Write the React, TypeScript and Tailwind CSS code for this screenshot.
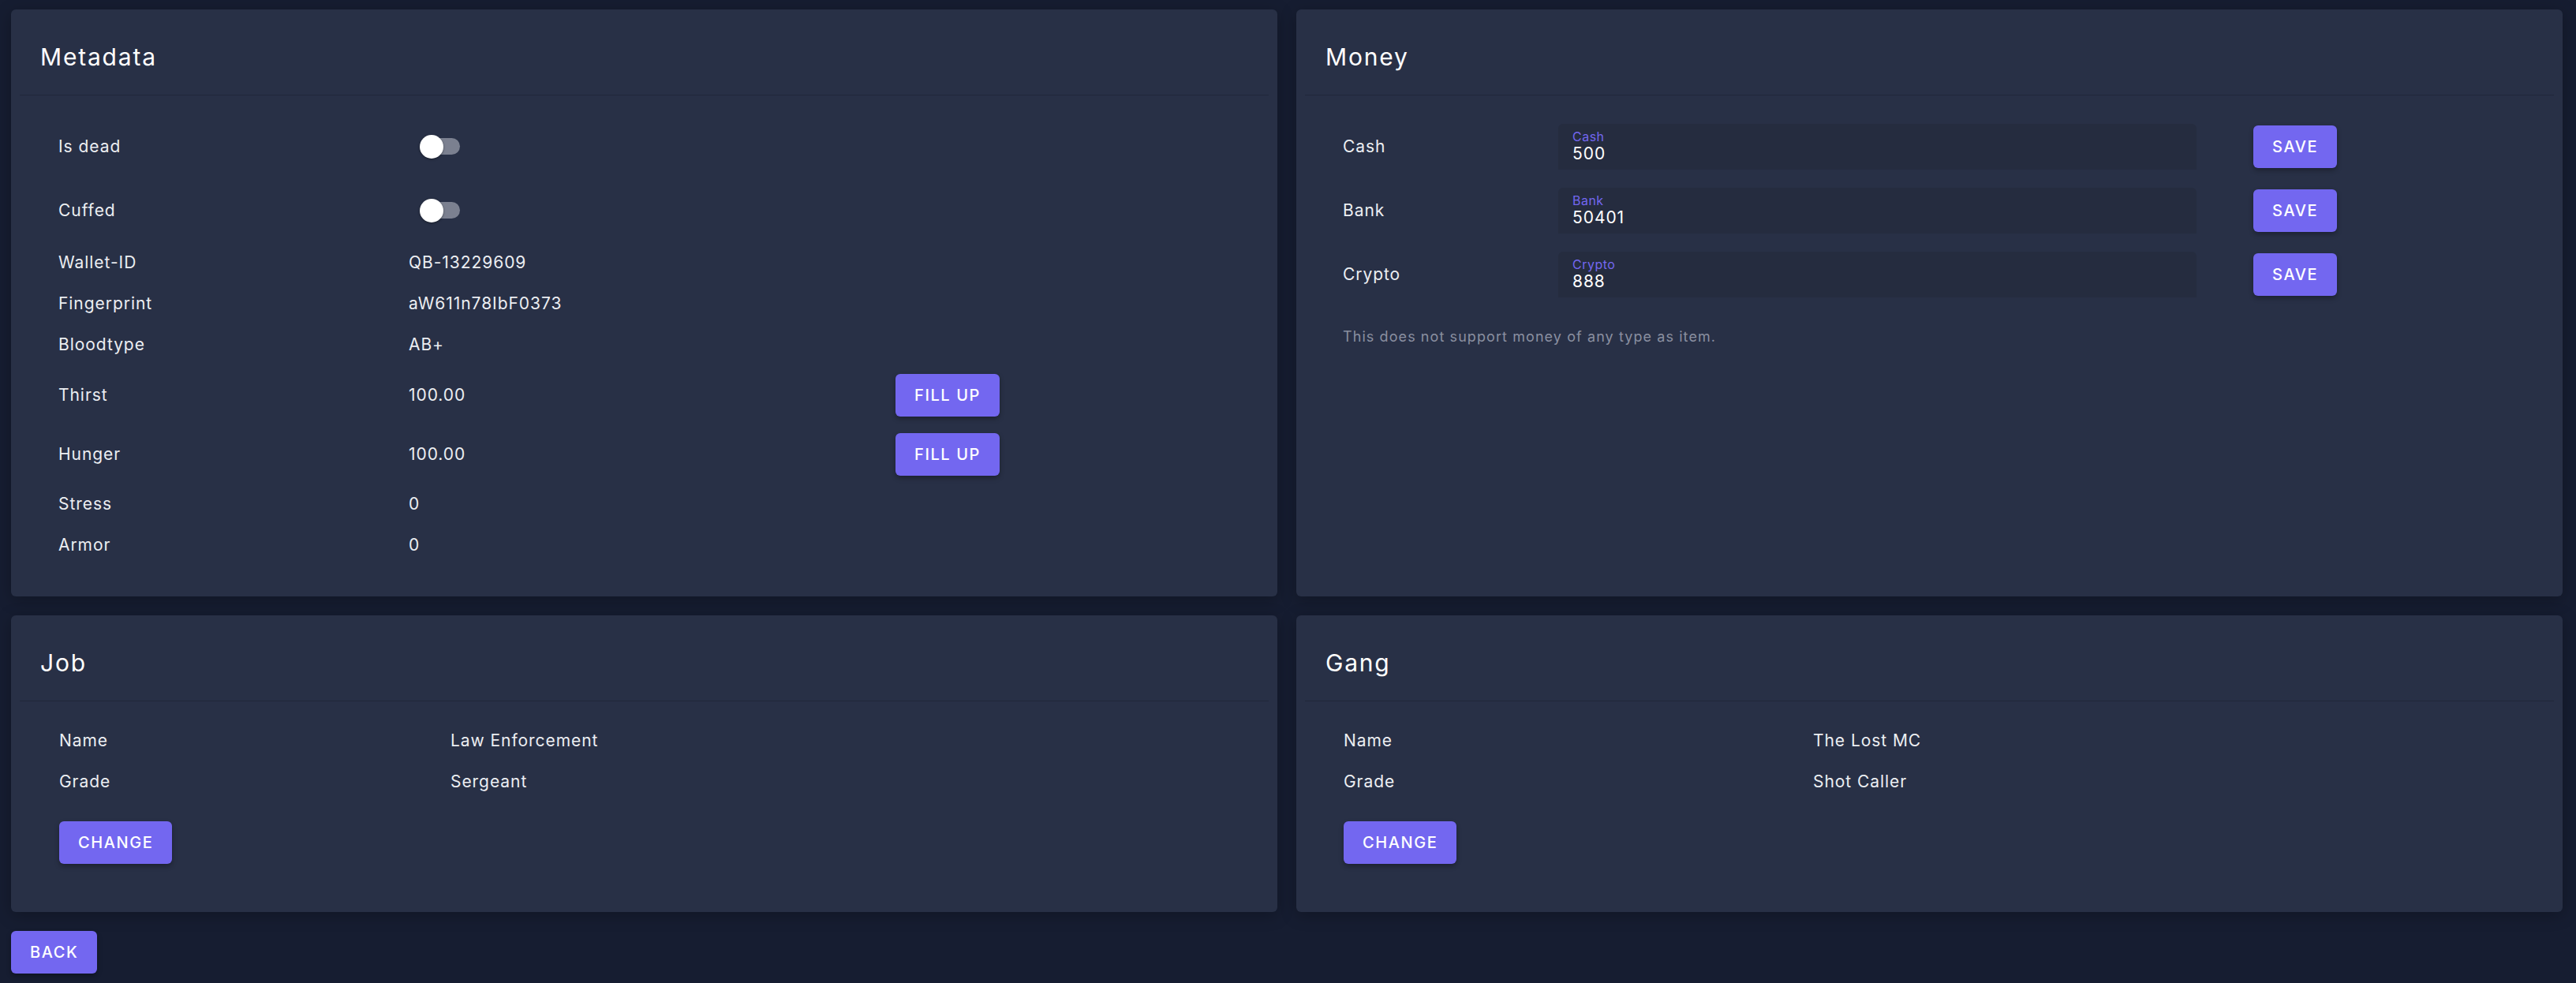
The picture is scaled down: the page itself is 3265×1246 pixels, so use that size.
import React from "react";

type Row =
  | { kind: "toggle"; label: string; on: boolean }
  | { kind: "text"; label: string; value: string }
  | { kind: "fill"; label: string; value: string };

const METADATA: Row[] = [
  { kind: "toggle", label: "Is dead", on: false },
  { kind: "toggle", label: "Cuffed", on: false },
  { kind: "text", label: "Wallet-ID", value: "QB-13229609" },
  { kind: "text", label: "Fingerprint", value: "aW611n78IbF0373" },
  { kind: "text", label: "Bloodtype", value: "AB+" },
  { kind: "fill", label: "Thirst", value: "100.00" },
  { kind: "fill", label: "Hunger", value: "100.00" },
  { kind: "text", label: "Stress", value: "0" },
  { kind: "text", label: "Armor", value: "0" },
];

const MONEY = [
  { label: "Cash", value: "500" },
  { label: "Bank", value: "50401" },
  { label: "Crypto", value: "888" },
];

function Btn({ children }: { children: React.ReactNode }) {
  return (
    <button className="flex h-[54px] items-center justify-center rounded-[6px] bg-[#7367f0] px-[24px] text-[20px] font-medium uppercase tracking-[0.08em] text-white shadow-[0_3px_6px_rgba(0,0,0,0.3)]">
      {children}
    </button>
  );
}

function Toggle() {
  return (
    <div className="relative ml-[14px] flex h-[30px] w-[51px] items-center">
      <div className="ml-[4px] h-[21px] w-[47px] rounded-full bg-[#7b8090]" />
      <div className="absolute left-0 top-0 h-[30px] w-[30px] rounded-full bg-white shadow-[0_1px_3px_rgba(0,0,0,0.4)]" />
    </div>
  );
}

function Card({ title, children }: { title: string; children: React.ReactNode }) {
  return (
    <div className="flex flex-col rounded-[6px] bg-[#283046] shadow-[0_4px_20px_rgba(0,0,0,0.25)]">
      <div className="h-[108px] px-[37px] pt-[38px]">
        <h2 className="text-[30px] leading-[45px] font-normal tracking-[0.06em] text-white">{title}</h2>
      </div>
      <div className="mx-[11px] h-px bg-[#20273a]" />
      {children}
    </div>
  );
}

function InfoCard({ title, labelWidth, pl, rows }: { title: string; labelWidth: string; pl: string; rows: [string, string][] }) {
  return (
    <Card title={title}>
      <div className={`flex flex-col pt-[24px] pb-[61px] ${pl}`}>
        {rows.map(([label, value]) => (
          <div key={label} className="flex h-[52px] items-center">
            <span className={labelWidth}>{label}</span>
            <span>{value}</span>
          </div>
        ))}
        <div className="mt-[24px] flex">
          <Btn>Change</Btn>
        </div>
      </div>
    </Card>
  );
}

export default function App() {
  return (
    <div className="min-h-screen bg-[#161d31] pb-[11px] pl-[14px] pr-[17px] pt-[12px] font-['Inter','Noto_Sans',sans-serif] text-[21px] tracking-[0.045em] text-[#eceef2]">
      <div className="grid grid-cols-2 gap-[24px]">
        <Card title="Metadata">
          <div className="flex flex-col pb-[39px] pl-[60px] pt-[24px]">
            {METADATA.map((row) => (
              <div
                key={row.label}
                className={`grid grid-cols-[444px_617px_auto] items-center ${
                  row.kind === "toggle" ? "h-[81px]" : row.kind === "fill" ? "h-[75px]" : "h-[52px]"
                }`}
              >
                <span>{row.label}</span>
                {row.kind === "toggle" ? <Toggle /> : <span>{row.value}</span>}
                {row.kind === "fill" ? (
                  <div className="flex">
                    <Btn>Fill up</Btn>
                  </div>
                ) : (
                  <span />
                )}
              </div>
            ))}
          </div>
        </Card>

        <Card title="Money">
          <div className="flex flex-col pl-[59px] pt-[24px]">
            {MONEY.map((m) => (
              <div key={m.label} className="grid h-[81px] grid-cols-[273px_809px_72px_auto] items-center">
                <span>{m.label}</span>
                <div className="h-[58px] rounded-t-[6px] bg-[#252c3f] pl-[18px] pt-[7px]">
                  <div className="text-[16px] leading-[19px] tracking-[0.03em] text-[#7367f0]">{m.label}</div>
                  <div className="text-[21px] leading-[24px] text-white">{m.value}</div>
                </div>
                <span />
                <div className="flex">
                  <Btn>Save</Btn>
                </div>
              </div>
            ))}
            <p className="mt-[25px] text-[18px] leading-[27px] tracking-[0.06em] text-[#8a8fa0]">
              This does not support money of any type as item.
            </p>
          </div>
        </Card>

        <InfoCard
          title="Job"
          pl="pl-[61px]"
          labelWidth="w-[496px]"
          rows={[
            ["Name", "Law Enforcement"],
            ["Grade", "Sergeant"],
          ]}
        />
        <InfoCard
          title="Gang"
          pl="pl-[60px]"
          labelWidth="w-[595px]"
          rows={[
            ["Name", "The Lost MC"],
            ["Grade", "Shot Caller"],
          ]}
        />
      </div>
      <div className="mt-[24px] flex">
        <Btn>Back</Btn>
      </div>
    </div>
  );
}
